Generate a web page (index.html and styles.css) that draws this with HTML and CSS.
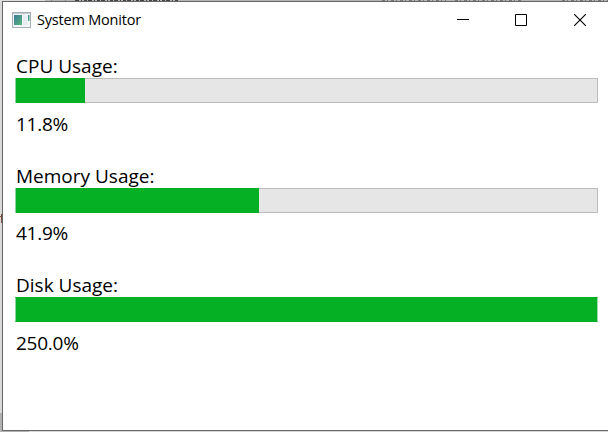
FILE: index.html
```html
<!DOCTYPE html>
<html lang="en">
<head>
<meta charset="utf-8">
<title>System Monitor</title>
<link rel="stylesheet" href="styles.css">
</head>
<body>
<div class="backdrop" aria-hidden="true">
  <svg width="608" height="432" shape-rendering="crispEdges">
    <rect width="608" height="2" fill="#b5b5b5"/>
    <rect width="45" height="2" fill="#dedede"/>
    <path d="M51 0v2M65 0v2" stroke="#888"/>
    <path d="M75 .5h103" stroke="#444" stroke-dasharray="4 2 1 2 3 1"/>
    <path d="M382 .5h64M455 .5h67M562 .5h46" stroke="#777" stroke-dasharray="3 2 1 3"/>
    <rect y="413" width="29" height="19" fill="#b2b2b2"/>
    <path d="M1.5 214v9M0 216.500h2" stroke="#77513c"/>
  </svg>
</div>
<main class="window">
  <header class="titlebar">
    <svg class="app-icon" width="19" height="16" viewBox="0 0 19 16">
      <rect x=".5" y=".5" width="18" height="15" fill="#f5f6f9" stroke="#a5adb7"/>
      <path d="M1 1.500h17" stroke="#c5cad3"/>
      <defs><linearGradient id="g" x2="1" y2="1"><stop stop-color="#3c7a9b"/><stop offset="1" stop-color="#55b77a"/></linearGradient></defs>
      <rect x="2" y="3" width="8" height="10" fill="url(#g)"/>
      <rect x="11" y="3" width="4" height="10" fill="#e7ebf2"/>
      <rect x="16" y="3" width="1.500" height="6" fill="url(#g)"/>
    </svg>
    <h1 class="title">System Monitor</h1>
    <div class="controls">
      <svg width="12" height="12" viewBox="0 0 12 12"><path d="M0 5.500h12" stroke="#000"/></svg>
      <svg width="12" height="12" viewBox="0 0 12 12"><path d="M.5.5h11v11H.5z" fill="none" stroke="#000"/></svg>
      <svg class="close" width="12" height="12" viewBox="0 0 12 12"><path d="M0 0l12 12M12 0L0 12" stroke="#000" stroke-width="1.100"/></svg>
    </div>
  </header>
  <section class="meter">
    <div class="label">CPU Usage:</div>
    <div class="bar"><div class="fill" style="width:11.8%"></div></div>
    <div class="value">11.8%</div>
  </section>
  <section class="meter memory">
    <div class="label">Memory Usage:</div>
    <div class="bar"><div class="fill" style="width:41.9%"></div></div>
    <div class="value">41.9%</div>
  </section>
  <section class="meter">
    <div class="label">Disk Usage:</div>
    <div class="bar full"><div class="fill" style="width:100%"></div></div>
    <div class="value">250.0%</div>
  </section>
</main>
</body>
</html>
```
FILE: styles.css
```css
* { box-sizing: border-box; }
body {
  margin: 0;
  width: 608px;
  height: 432px;
  overflow: hidden;
  padding: 1px 0 1px 2px;
  background: #d9d9d9;
  color: #000;
  font-family: "Open Sans", "Noto Sans", sans-serif;
}
.backdrop { position: absolute; left: 0; top: 0; width: 608px; height: 432px; }
.backdrop svg { display: block; }
.window {
  position: relative;
  height: 430px;
  border: 1px solid #666;
  border-right: 0;
  background: #fff;
}
.titlebar {
  display: flex;
  align-items: center;
  height: 36px;
  margin-bottom: 16px;
  padding: 0 22px 0 9px;
}
.app-icon { margin-right: 6px; }
.title {
  margin: 0;
  font-size: 14.5px;
  font-weight: 400;
  line-height: 36px;
  letter-spacing: -.2px;
  white-space: nowrap;
}
.controls { display: flex; gap: 46px; margin-left: auto; }
.controls svg { display: block; }
.controls .close { margin-left: 1px; }
.meter { height: 109px; padding: 0 10px 0 12px; }
.meter.memory { padding-top: 1px; }
.label, .value {
  width: max-content;
  padding-left: 1px;
  font-size: 19px;
  line-height: 24px;
  letter-spacing: 0;
  white-space: nowrap;
}
.bar {
  height: 25px;
  border: 1px solid #bcbcbc;
  border-left-color: #8cd69b;
  background: #e6e6e6;
}
.bar.full { border-color: #06b025 #a5d8af #06b025 #8cd69b; }
.fill { height: 25px; margin: -1px 0 0; background: #06b025; }
.value { margin-top: 9px; letter-spacing: -.25px; }
.memory .value { margin-top: 8px; }
.meter:last-child { padding-top: 1px; }
```
